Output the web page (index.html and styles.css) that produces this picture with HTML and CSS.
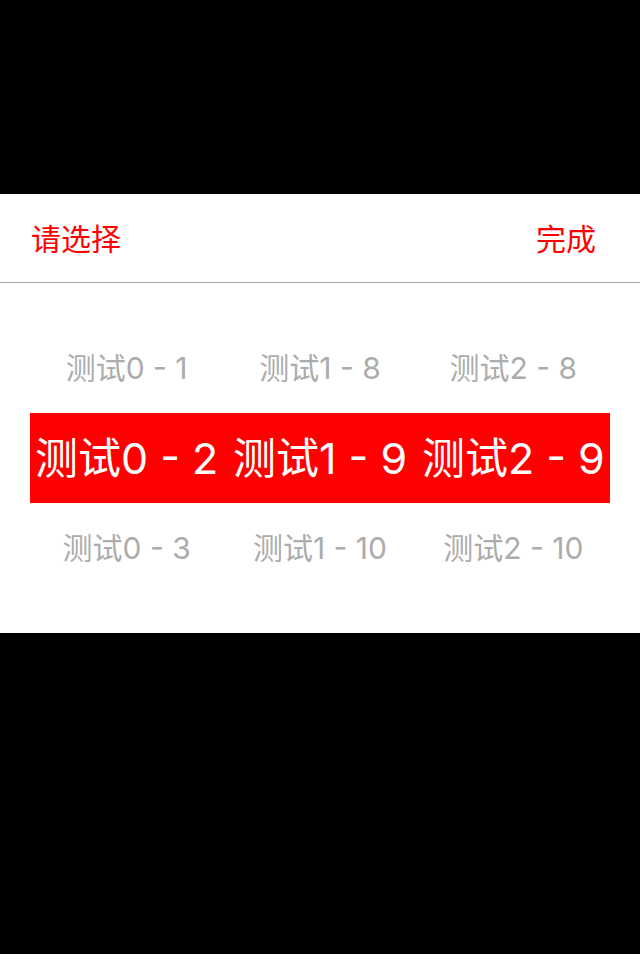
FILE: index.html
```html
<!DOCTYPE html>
<html lang="zh-CN">
<head>
<meta charset="utf-8">
<title>Picker</title>
<link rel="stylesheet" href="styles.css">
</head>
<body>
<div class="screen">
  <div class="backdrop"></div>
  <div class="sheet">
    <div class="toolbar">
      <span class="btn">请选择</span>
      <span class="btn">完成</span>
    </div>
    <div class="picker">
      <div class="row">
        <span class="cell">测试0 - 1</span>
        <span class="cell">测试1 - 8</span>
        <span class="cell">测试2 - 8</span>
      </div>
      <div class="row selected">
        <span class="cell">测试0 - 2</span>
        <span class="cell">测试1 - 9</span>
        <span class="cell">测试2 - 9</span>
      </div>
      <div class="row">
        <span class="cell">测试0 - 3</span>
        <span class="cell">测试1 - 10</span>
        <span class="cell">测试2 - 10</span>
      </div>
    </div>
  </div>
  <div class="backdrop fill"></div>
</div>
</body>
</html>
```
FILE: styles.css
```css
html, body {
  margin: 0;
  padding: 0;
  background: #000;
}
body {
  font-family: "Inter", "Noto Sans CJK SC", sans-serif;
}
.screen {
  width: 640px;
  height: 954px;
  display: flex;
  flex-direction: column;
}
.backdrop {
  height: 194px;
  background: #000;
}
.backdrop.fill {
  flex: 1;
}
.sheet {
  background: #fff;
  display: flex;
  flex-direction: column;
}
.toolbar {
  height: 89px;
  display: flex;
  align-items: center;
  justify-content: space-between;
  padding: 0 44px 3px 31px;
  box-sizing: border-box;
  border-bottom: 1px solid #a9a9a9;
}
.btn {
  color: #ff0000;
  font-size: 30px;
  font-family: "Noto Sans CJK SC", sans-serif;
  line-height: 1;
}
.picker {
  height: 350px;
  display: flex;
  flex-direction: column;
  justify-content: center;
  padding: 0 30px;
}
.row {
  height: 90px;
  display: grid;
  grid-template-columns: repeat(3, 1fr);
  align-items: center;
  color: #acacac;
  font-size: 30px;
}
.cell {
  text-align: center;
  white-space: nowrap;
  line-height: 1;
}
.row.selected {
  background: #ff0000;
  color: #fff;
  font-size: 43px;
}
```
